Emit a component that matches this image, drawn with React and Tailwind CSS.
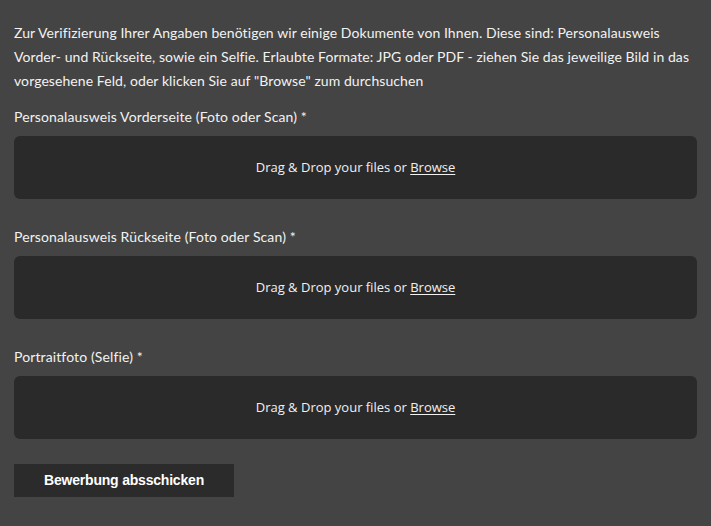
export default function App() {
  const fields = [
    'Personalausweis Vorderseite (Foto oder Scan) *',
    'Personalausweis Rückseite (Foto oder Scan) *',
    'Portraitfoto (Selfie) *',
  ];

  return (
    <div className="min-h-[526px] bg-[#444444] text-[#f2f2f2] px-[14px] pt-[21px] pb-[29px] font-['Lato',sans-serif] tracking-[0.08px]">
      <p className="text-[14px] leading-[24px]">
        Zur Verifizierung Ihrer Angaben benötigen wir einige Dokumente von Ihnen. Diese sind: Personalausweis
        Vorder- und Rückseite, sowie ein Selfie. Erlaubte Formate: JPG oder PDF - ziehen Sie das jeweilige Bild in das
        vorgesehene Feld, oder klicken Sie auf "Browse" zum durchsuchen
      </p>

      {fields.map((label, i) => (
        <div key={i} className={i === 0 ? 'mt-[12px]' : 'mt-[26px]'}>
          <label className="block text-[14px] leading-[24px] tracking-[0.12px]">{label}</label>
          <div className="mt-[7px] h-[63px] rounded-[6px] bg-[#2a2a2a] flex items-center justify-center pt-[1px] font-['Open_Sans',sans-serif] text-[13px] tracking-normal text-[#f0f0f0]">
            <span>
              Drag &amp; Drop your files or <span className="underline underline-offset-2 cursor-pointer">Browse</span>
            </span>
          </div>
        </div>
      ))}

      <button className="mt-[25px] h-[33px] w-[220px] bg-[#2b2b2b] text-white font-['Liberation_Sans',sans-serif] font-bold text-[14px] tracking-[-0.2px]">
        Bewerbung absschicken
      </button>
    </div>
  );
}
